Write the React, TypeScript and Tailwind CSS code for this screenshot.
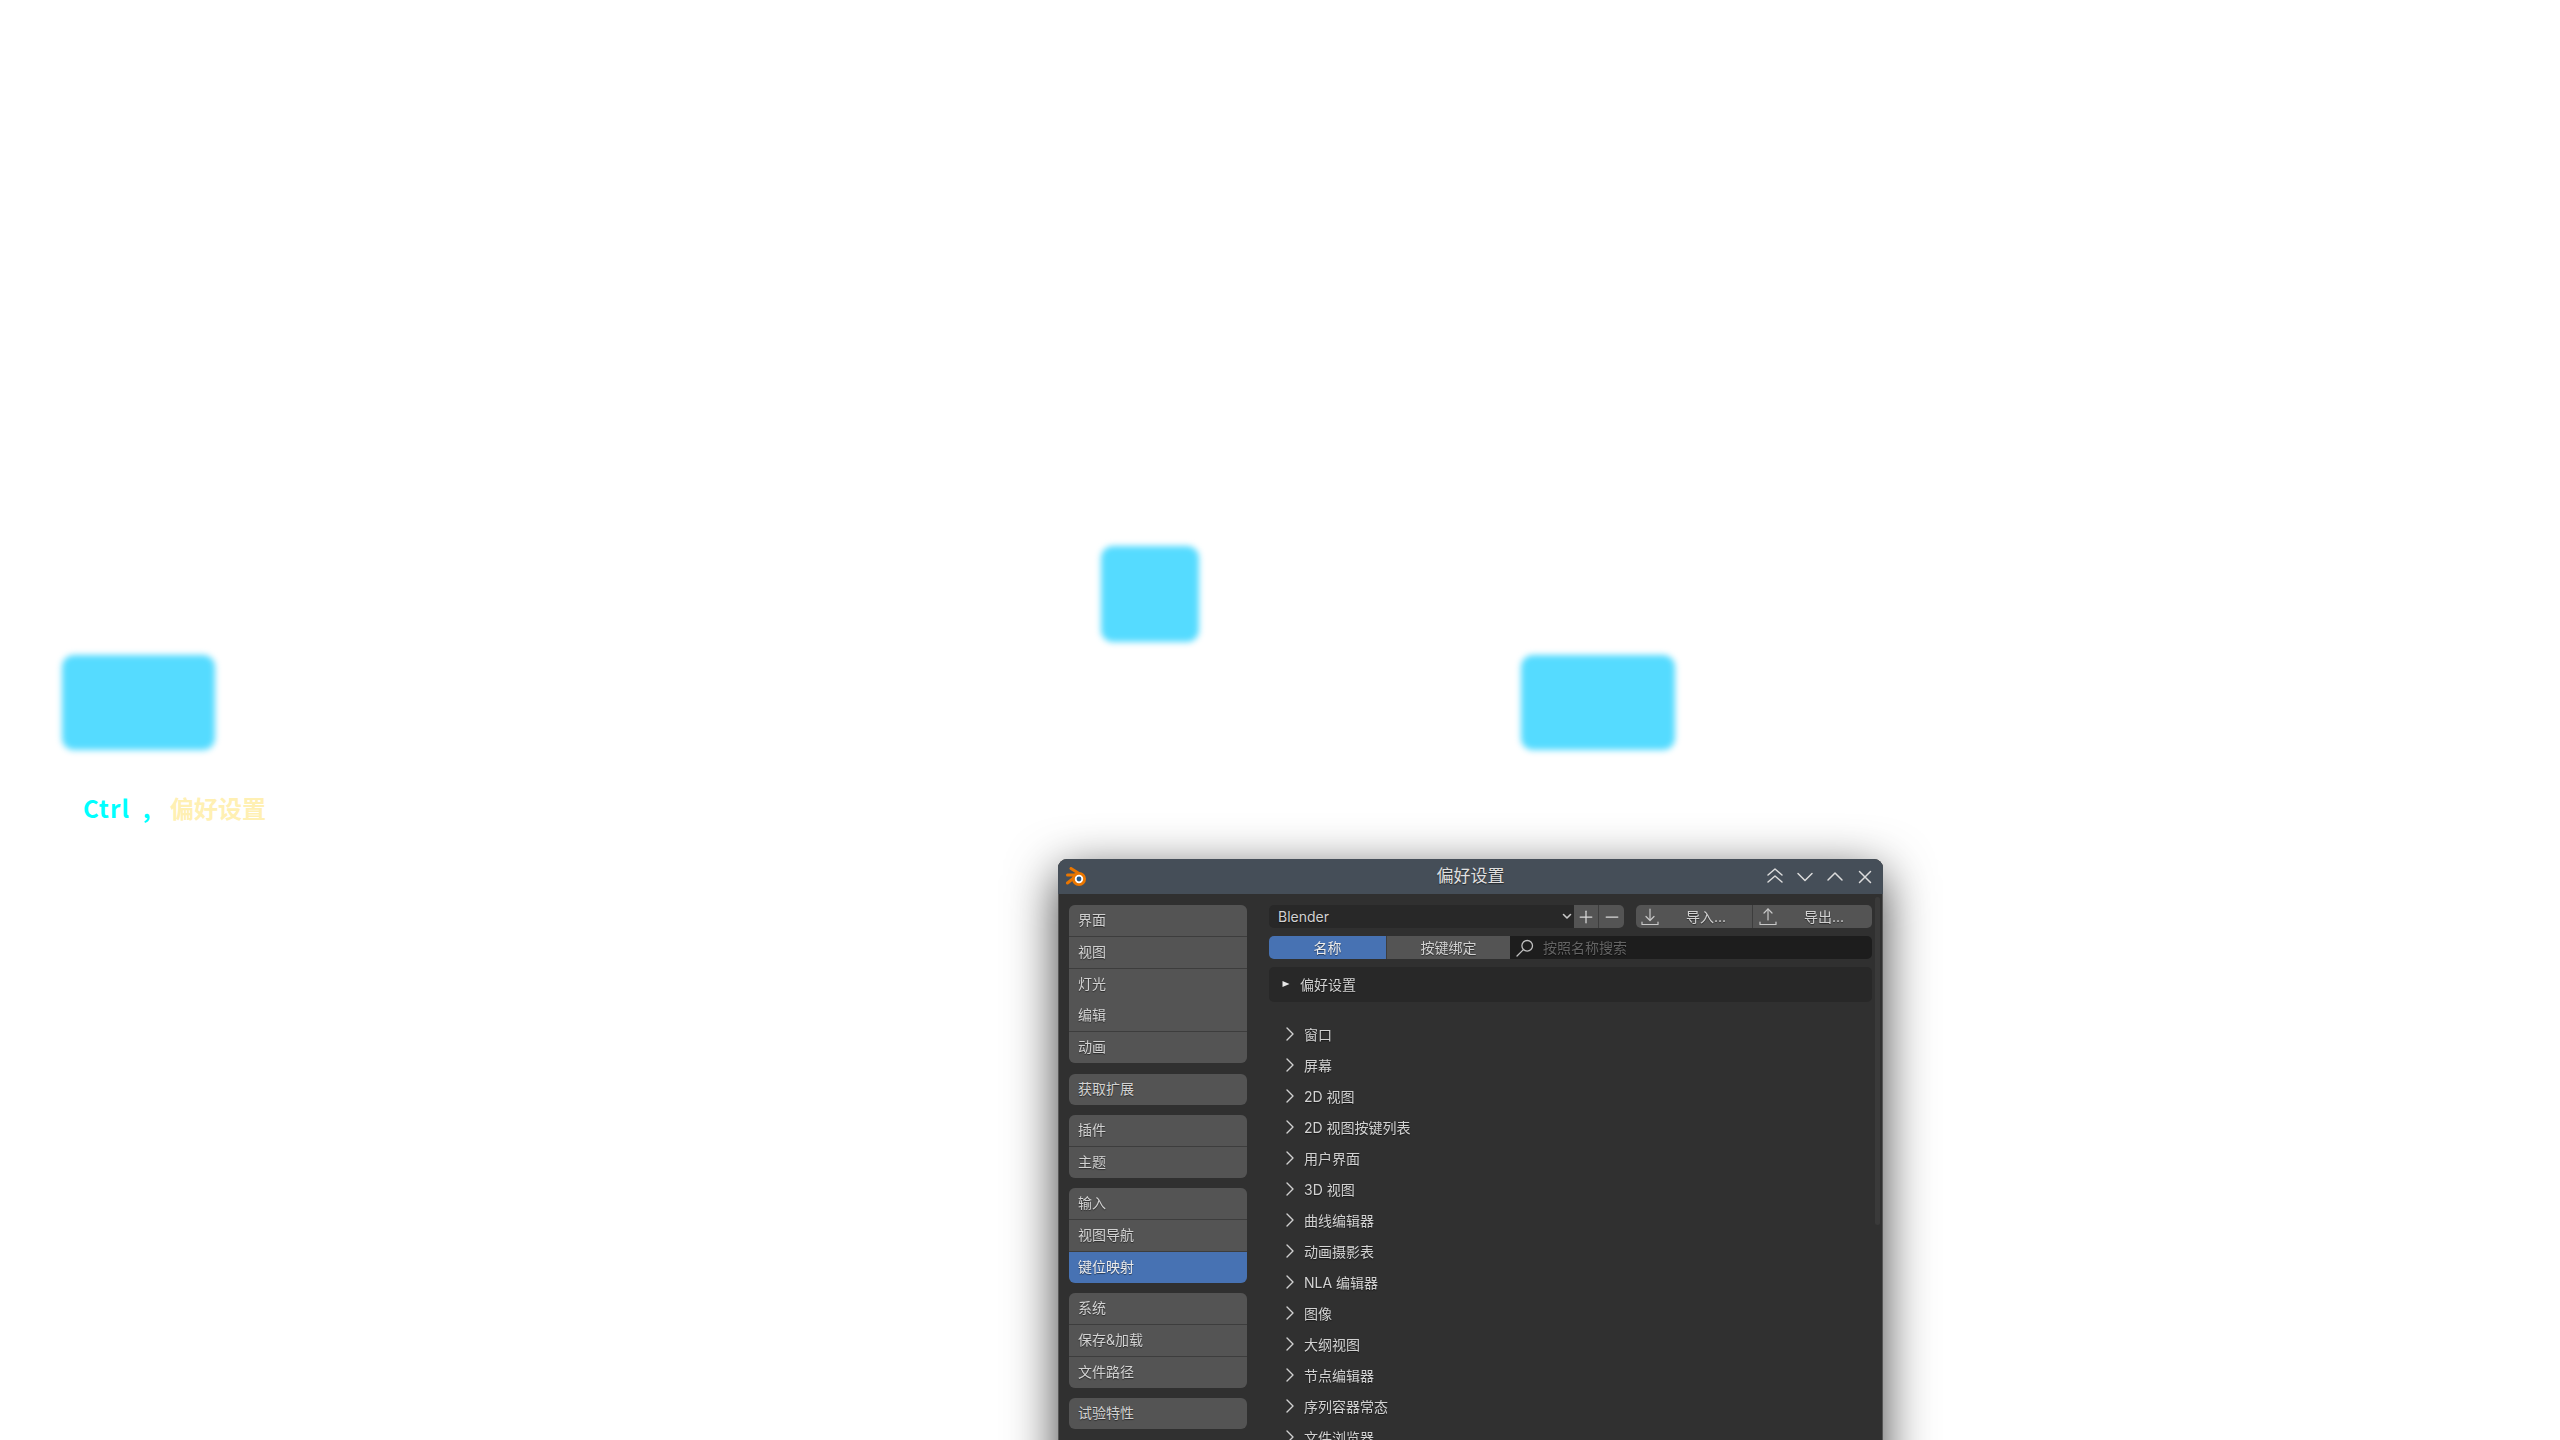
import React from 'react';
import { Minus, Plus } from 'lucide-react';

const cjk = { fontFamily: 'Inter, "Noto Sans CJK SC", sans-serif' };

const sideGroups = [
  ['界面', '视图', '灯光', '编辑', '动画'],
  ['获取扩展'],
  ['插件', '主题'],
  ['输入', '视图导航', '键位映射'],
  ['系统', '保存&加载', '文件路径'],
  ['试验特性'],
];

const keymapRows = [
  '窗口', '屏幕', '2D 视图', '2D 视图按键列表', '用户界面', '3D 视图', '曲线编辑器',
  '动画摄影表', 'NLA 编辑器', '图像', '大纲视图', '节点编辑器', '序列容器常态', '文件浏览器',
];

function BlenderLogo() {
  return (
    <svg width="20" height="20" viewBox="0 0 20 20" fill="none" stroke="#ea7600" strokeLinecap="round">
      <path d="M5 1.5 L13 6.5" strokeWidth="3" />
      <path d="M1.5 8 H12" strokeWidth="3" />
      <path d="M1.5 16 L9 10" strokeWidth="3" />
      <circle cx="13" cy="12" r="5.6" fill="#fff" strokeWidth="2.8" />
      <circle cx="13" cy="12" r="2.4" fill="#265787" stroke="none" />
    </svg>
  );
}

// title bar glyphs, drawn wider than the lucide chevrons
function TitleIcon({ d }: { d: string }) {
  return (
    <svg width="20" height="20" viewBox="0 0 20 20" fill="none" stroke="#dcdcdc" strokeWidth="1.5" strokeLinecap="round" strokeLinejoin="round">
      <path d={d} />
    </svg>
  );
}

function ArrowTray({ up }: { up?: boolean }) {
  return (
    <svg width="20" height="20" viewBox="0 0 20 20" fill="none" stroke="#c8c8c8" strokeWidth="1.2" strokeLinecap="round" strokeLinejoin="round">
      <path d="M10 2 V13" />
      {up ? <path d="M6 6 L10 2 L14 6" /> : <path d="M6 9.5 L10 13.5 L14 9.5" />}
      <path d="M2 15 V17.5 H18 V15" />
    </svg>
  );
}

function Sidebar() {
  return (
    <div className="flex w-[178px] flex-col gap-[10.5px]">
      {sideGroups.map((group) => (
        <div key={group[0]} className="flex flex-col gap-[0.75px] overflow-hidden rounded-[6px] bg-[#3d3d3d]">
          {group.map((label) => (
            <div
              key={label}
              className={`flex h-[31px] items-center pb-[2px] pl-[9px] text-[14px] [text-shadow:0_1px_1px_rgba(0,0,0,0.5)] ${
                label === '键位映射' ? 'bg-[#4772b3] text-[#ececec]' : 'bg-[#545454] text-[#d2d2d2]'
              }`}
            >
              {label}
            </div>
          ))}
        </div>
      ))}
    </div>
  );
}

function KeymapPanel() {
  return (
    <div className="flex w-[603px] flex-col [text-shadow:0_1px_1px_rgba(0,0,0,0.5)]">
      <div className="flex h-[23px] items-stretch">
        <div className="flex w-[305px] items-center justify-between rounded-l-[5px] bg-[#282828] pb-[1px] pl-[9px] text-[14px] text-[#d2d2d2]">
          <span>Blender</span>
          <svg width="14" height="14" viewBox="0 0 14 14" fill="none" stroke="#c8c8c8" strokeWidth="1.6" strokeLinecap="round" strokeLinejoin="round">
            <path d="M3.5 5.5 L7 9 L10.5 5.5" />
          </svg>
        </div>
        <div className="flex w-[25px] items-center justify-center border-r border-[#3d3d3d] bg-[#545454]">
          <Plus size={20} strokeWidth={1.5} color="#d8d8d8" />
        </div>
        <div className="flex w-[25px] items-center justify-center rounded-r-[5px] bg-[#545454]">
          <Minus size={20} strokeWidth={1.5} color="#d8d8d8" />
        </div>
        <div className="ml-[12px] flex w-[117px] items-center rounded-l-[5px] border-r border-[#3d3d3d] bg-[#545454] pl-[4px] text-[14px] text-[#d2d2d2]">
          <ArrowTray />
          <span className="ml-[26px]">导入...</span>
        </div>
        <div className="flex w-[119px] items-center rounded-r-[5px] bg-[#545454] pl-[5px] text-[14px] text-[#d2d2d2]">
          <ArrowTray up />
          <span className="ml-[26px]">导出...</span>
        </div>
      </div>

      <div className="mt-[8px] flex h-[23px] items-stretch text-[14px]">
        <div className="flex w-[117px] items-center justify-center rounded-l-[5px] bg-[#4772b3] text-[#ececec]">名称</div>
        <div className="flex w-[124px] items-center justify-center border-l border-[#3d3d3d] bg-[#545454] text-[#d2d2d2]">按键绑定</div>
        <div className="flex flex-1 items-center rounded-r-[5px] bg-[#1d1d1d] pl-[6px] text-[#646464]">
          <svg width="18" height="18" viewBox="0 0 18 18" fill="none" stroke="#c0c0c0" strokeWidth="1.3" strokeLinecap="round">
            <circle cx="11.2" cy="6.8" r="5.3" />
            <path d="M7.4 10.6 L1 17" />
          </svg>
          <span className="ml-[9px]">按照名称搜索</span>
        </div>
      </div>

      <div className="mt-[8px] flex h-[35px] items-center rounded-[5px] bg-[#282828] pb-[1px] pl-[13px] text-[14px] text-[#d2d2d2]">
        <svg width="8" height="8" viewBox="0 0 8 8">
          <path d="M0.5 1 L7.5 4 L0.5 7 Z" fill="#e8e8e8" />
        </svg>
        <span className="ml-[10px]">偏好设置</span>
      </div>

      <div className="mt-[16.5px] flex flex-col pl-[17px]">
        {keymapRows.map((row) => (
          <div key={row} className="flex h-[31px] shrink-0 items-center text-[14px] text-[#d2d2d2]">
            <svg width="8" height="14" viewBox="0 0 8 14" fill="none" stroke="#d0d0d0" strokeWidth="1.4" strokeLinecap="round" strokeLinejoin="round">
              <path d="M1 1 L7 7 L1 13" />
            </svg>
            <span className="ml-[10px]">{row}</span>
          </div>
        ))}
      </div>
    </div>
  );
}

function PrefsWindow() {
  return (
    <div
      style={cjk}
      className="absolute left-[1058px] top-[859px] h-[700px] w-[825px] overflow-hidden rounded-t-[9px] bg-[#303030] shadow-[0_14px_50px_rgba(0,0,0,0.75),inset_-1px_0_0_#565656,inset_1px_0_0_#565656] blur-[0.5px]"
    >
      <div className="relative flex h-[35px] items-center justify-center bg-[#454e58] text-[17px] text-[#e0e0e0] [text-shadow:0_1px_1px_rgba(0,0,0,0.5)]">
        <div className="absolute left-[8px] top-[8px]">
          <BlenderLogo />
        </div>
        偏好设置
        <div className="absolute right-[8px] top-[8px] flex gap-[10px]">
          <TitleIcon d="M3 8 L10 2 L17 8 M3 15 L10 9 L17 15" />
          <TitleIcon d="M3 6.5 L10 13.5 L17 6.5" />
          <TitleIcon d="M3 13 L10 6 L17 13" />
          <TitleIcon d="M4.5 4.5 L15.5 15.5 M15.5 4.5 L4.5 15.5" />
        </div>
      </div>
      <div className="flex gap-[22px] pl-[11px] pt-[11px]">
        <Sidebar />
        <KeymapPanel />
      </div>
      <div className="absolute left-[817px] top-[38px] h-[328px] w-[5px] rounded-full bg-[#3a3a3a]" />
    </div>
  );
}

function Block({ className }: { className: string }) {
  return <div className={`absolute rounded-[12px] bg-[#55dbff] blur-[3px] ${className}`} />;
}

export default function App() {
  return (
    <div className="relative h-[1440px] w-[2560px] overflow-hidden bg-white">
      <Block className="left-[1101px] top-[546px] h-[96px] w-[98px]" />
      <Block className="left-[62px] top-[655px] h-[95px] w-[153px]" />
      <Block className="left-[1521px] top-[655px] h-[95px] w-[154px]" />
      <div
        className="absolute left-[83px] top-[790px] flex text-[24px] font-bold whitespace-pre"
        style={{ fontFamily: '"Noto Sans CJK SC", sans-serif' }}
      >
        <span className="w-[87px] tracking-[1px] text-[#00ffff]">{'Ctrl  ,'}</span>
        <span className="text-[#fff0b3]">偏好设置</span>
      </div>
      <PrefsWindow />
    </div>
  );
}
